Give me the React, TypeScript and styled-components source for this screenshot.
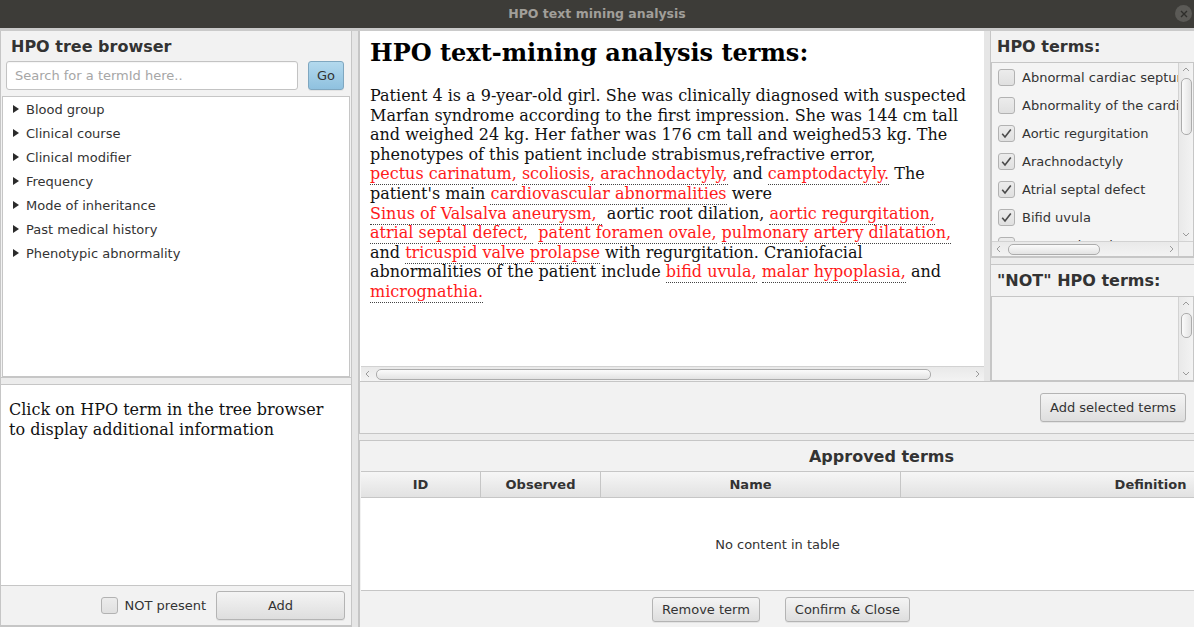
import React from 'react';
import styled, { createGlobalStyle } from 'styled-components';

const Global = createGlobalStyle`
  html, body { margin: 0; padding: 0; background: #f2f2f2; }
  body { font-family: "DejaVu Sans", "Liberation Sans", sans-serif; overflow: hidden; }
  #root { width: 1194px; height: 627px; }
  * { box-sizing: border-box; }
`;

const BORDER = '#c6c6c6';

const Window = styled.div`
  width: 1194px;
  height: 627px;
  display: flex;
  flex-direction: column;
  overflow: hidden;
  background: #f2f2f2;
`;

const TitleBar = styled.div`
  position: relative;
  flex: 0 0 28px;
  height: 28px;
  background: #3d3c38;
  color: #a19f9a;
  font: bold 12.5px "DejaVu Sans", sans-serif;
  display: flex;
  align-items: center;
  justify-content: center;
  padding-bottom: 1px;
`;

const CloseBtn = styled.div`
  position: absolute;
  right: 2px;
  top: 5px;
  width: 17px;
  height: 17px;
  border-radius: 50%;
  background: #5b5a56;
  display: flex;
  align-items: center;
  justify-content: center;
`;

const Body = styled.div`
  flex: 1;
  min-height: 0;
  display: flex;
  background: #cacaca;
  padding-top: 3px;
`;

const Column = styled.div<{ $w?: number }>`
  display: flex;
  flex-direction: column;
  min-height: 0;
  ${p => (p.$w ? `flex: 0 0 ${p.$w}px; width: ${p.$w}px;` : 'flex: 1; min-width: 0;')}
`;

const LeftCol = styled(Column)`
  border-left: 1px solid ${BORDER};
  border-right: 1px solid ${BORDER};
  border-bottom: 2px solid ${BORDER};
  background: #f2f2f2;
`;

const VDivider = styled.div`
  flex: 0 0 7px;
  background: #e6e6e6;
  border-right: 1px solid ${BORDER};
`;

const HDivider = styled.div`
  flex: 0 0 8px;
  background: #ececec;
  border-top: 1px solid ${BORDER};
  border-bottom: 1px solid ${BORDER};
`;

const Pane = styled.div<{ $h?: number }>`
  display: flex;
  flex-direction: column;
  background: #f2f2f2;
  min-height: 0;
  ${p => (p.$h ? `flex: 0 0 ${p.$h}px;` : 'flex: 1;')}
`;

const PaneHeader = styled.div`
  padding: 6px 6px 6px 5px;
  display: flex;
  flex-direction: column;
  gap: 4px;
`;

const SansHeading = styled.div<{ $pad?: number }>`
  font: bold 16px "DejaVu Sans", sans-serif;
  color: #333;
  line-height: 20px;
  padding-left: ${p => p.$pad ?? 0}px;
  white-space: nowrap;
`;

const SearchRow = styled.div`
  display: flex;
  gap: 10px;
  height: 29px;
`;

const SearchInput = styled.input`
  width: 292px;
  height: 29px;
  border: 1px solid #c3c3c3;
  border-radius: 3px;
  background: #fff;
  padding: 0 8px;
  font: 13px "DejaVu Sans", sans-serif;
  color: #333;
  box-shadow: inset 0 1px 1px rgba(0, 0, 0, 0.04);
  outline: none;
  &::placeholder { color: #a6a6a6; }
`;

const Button = styled.button<{ $w?: number; $h?: number; $blue?: boolean }>`
  height: ${p => p.$h ?? 29}px;
  ${p => (p.$w ? `width: ${p.$w}px;` : 'padding: 0 9px;')}
  border: 1px solid ${p => (p.$blue ? '#7fa7c0' : '#b4b4b4')};
  border-radius: 3px;
  background: ${p =>
    p.$blue
      ? 'linear-gradient(#b3d9ee, #8fc1df)'
      : 'linear-gradient(#f4f4f4, #dedede)'};
  box-shadow: 0 1px 0 rgba(0, 0, 0, 0.06);
  font: 13px "DejaVu Sans", sans-serif;
  color: #333;
  white-space: nowrap;
  cursor: default;
`;

const Tree = styled.div`
  flex: 1;
  margin: 0 1px;
  background: #fff;
  border: 1px solid ${BORDER};
`;

const TreeItem = styled.div`
  height: 24px;
  display: flex;
  align-items: center;
  padding-left: 10px;
  font: 13px "DejaVu Sans", sans-serif;
  color: #333;
`;

const Disclosure = styled.span`
  width: 0;
  height: 0;
  border-left: 6px solid #2b2b2b;
  border-top: 4px solid transparent;
  border-bottom: 4px solid transparent;
  margin-right: 7px;
`;

const InfoBox = styled.div`
  flex: 1;
  background: #fff;
  padding: 15px 8px;
  font: 16px "DejaVu Serif", serif;
  line-height: 19.5px;
  color: #111;
`;

const BottomBar = styled.div<{ $h: number; $center?: boolean }>`
  flex: 0 0 ${p => p.$h}px;
  display: flex;
  align-items: center;
  justify-content: ${p => (p.$center ? 'center' : 'flex-end')};
  gap: ${p => (p.$center ? 25 : 10)}px;
  padding: ${p => (p.$center ? '0 0 0 7px' : '0 6px')};
  background: #f2f2f2;
  border-top: 1px solid ${BORDER};
`;

const CheckLabel = styled.label`
  display: flex;
  align-items: center;
  gap: 7px;
  font: 13px "DejaVu Sans", sans-serif;
  color: #333;
  white-space: nowrap;
`;

const Box = styled.span`
  flex: 0 0 17px;
  width: 17px;
  height: 17px;
  border: 1px solid #b2b2b2;
  border-radius: 3px;
  background: linear-gradient(#ececec, #e0e0e0);
  display: flex;
  align-items: center;
  justify-content: center;
`;

const Check = ({ on }: { on?: boolean }) => (
  <Box>
    {on && (
      <svg width="13" height="13" viewBox="0 0 13 13">
        <path d="M2.2 6.8 L5 10 L10.8 2.4" fill="none" stroke="#4a4a4a" strokeWidth="1.6" />
      </svg>
    )}
  </Box>
);

/* ---------- scrollbars ---------- */

const ScrollH = styled.div`
  flex: 0 0 15px;
  height: 15px;
  display: flex;
  align-items: center;
  background: linear-gradient(#e9e9e9, #f3f3f3);
  border-top: 1px solid #d2d2d2;
`;

const ScrollV = styled.div`
  flex: 0 0 15px;
  width: 15px;
  display: flex;
  flex-direction: column;
  align-items: center;
  background: linear-gradient(90deg, #e9e9e9, #f3f3f3);
  border-left: 1px solid #d2d2d2;
`;

const ArrowBox = styled.div<{ $v?: boolean }>`
  ${p => (p.$v ? 'height: 14px; width: 100%;' : 'width: 14px; height: 100%;')}
  flex: 0 0 14px;
  display: flex;
  align-items: center;
  justify-content: center;
`;

const Track = styled.div<{ $v?: boolean }>`
  flex: 1;
  display: flex;
  flex-direction: ${p => (p.$v ? 'column' : 'row')};
  align-items: center;
`;

const Thumb = styled.div<{ $v?: boolean; $off: number; $len: number }>`
  ${p =>
    p.$v
      ? `margin-top: ${p.$off}px; height: ${p.$len}px; width: 11px;`
      : `margin-left: ${p.$off}px; width: ${p.$len}px; height: 11px;`}
  border: 1px solid #acacac;
  border-radius: 5px;
  background: ${p =>
    p.$v ? 'linear-gradient(90deg, #fbfbfb, #e3e3e3)' : 'linear-gradient(#fbfbfb, #e3e3e3)'};
`;

const Chevron = ({ dir }: { dir: 'l' | 'r' | 'u' | 'd' }) => {
  const d = {
    l: 'M5 1 L2 4 L5 7',
    r: 'M3 1 L6 4 L3 7',
    u: 'M1 5 L4 2 L7 5',
    d: 'M1 3 L4 6 L7 3',
  }[dir];
  return (
    <svg width="8" height="8" viewBox="0 0 8 8">
      <path d={d} fill="none" stroke="#9a9a9a" strokeWidth="1" />
    </svg>
  );
};

const HScroll = ({ off, len }: { off: number; len: number }) => (
  <ScrollH>
    <ArrowBox><Chevron dir="l" /></ArrowBox>
    <Track><Thumb $off={off} $len={len} /></Track>
    <ArrowBox><Chevron dir="r" /></ArrowBox>
  </ScrollH>
);

const VScroll = ({ off, len }: { off: number; len: number }) => (
  <ScrollV>
    <ArrowBox $v><Chevron dir="u" /></ArrowBox>
    <Track $v><Thumb $v $off={off} $len={len} /></Track>
    <ArrowBox $v><Chevron dir="d" /></ArrowBox>
  </ScrollV>
);

/* ---------- center text ---------- */

const CenterPane = styled(Column)`
  border-left: 1px solid ${BORDER};
  padding-left: 1px;
  background: #fff;
`;

const TextArea = styled.div`
  flex: 1;
  min-height: 0;
  overflow: hidden;
  background: #fff;
  padding: 8px 8px 8px 9px;
  color: #111;
  font-family: "DejaVu Serif", serif;
`;

const DocTitle = styled.h1`
  margin: 0 0 19px;
  font: bold 24px "DejaVu Serif", serif;
  line-height: 28px;
  color: #000;
  white-space: nowrap;
`;

const DocText = styled.div`
  font-size: 16px;
  line-height: 19.6px;
  white-space: nowrap;
`;

const Term = styled.span`
  color: #ff1a1a;
  border-bottom: 1px dotted #444;
  padding-bottom: 1px;
`;

/* ---------- right panel ---------- */

const RightPane = styled(Column)`
  background: #f2f2f2;
`;

const RightHeader = styled.div`
  flex: 0 0 31px;
  display: flex;
  align-items: center;
  padding-left: 6px;
`;

const ListBox = styled.div<{ $h: number }>`
  flex: 0 0 ${p => p.$h}px;
  display: flex;
  flex-direction: column;
  border: 1px solid ${BORDER};
  background: #f4f4f4;
  min-height: 0;
`;

const ListMain = styled.div`
  flex: 1;
  min-height: 0;
  display: flex;
`;

const ListRows = styled.div`
  flex: 1;
  min-width: 0;
  overflow: hidden;
`;

const ListRow = styled.div`
  height: 28px;
  display: flex;
  align-items: center;
  gap: 7px;
  padding-left: 6px;
  font: 13px "DejaVu Sans", sans-serif;
  color: #333;
  white-space: nowrap;
`;

const BottomRow = styled.div`
  flex: 0 0 15px;
  display: flex;
`;

const Corner = styled.div`
  flex: 0 0 15px;
  background: #f0f0f0;
  border-top: 1px solid #d2d2d2;
  border-left: 1px solid #d2d2d2;
`;

const ListHScroll = styled.div`
  flex: 1;
  display: flex;
  flex-direction: column;
`;

/* ---------- lower right ---------- */

const RightCol = styled(Column)`
  background: #f2f2f2;
`;

const TopSplit = styled.div`
  flex: 0 0 350px;
  display: flex;
  min-height: 0;
`;

const ActionRow = styled.div`
  flex: 0 0 52px;
  display: flex;
  align-items: center;
  justify-content: flex-end;
  padding-right: 8px;
  border-top: 1px solid ${BORDER};
  border-left: 1px solid ${BORDER};
  background: #f2f2f2;
`;

const Approved = styled.div`
  flex: 1;
  display: flex;
  flex-direction: column;
  border-left: 1px solid ${BORDER};
  padding-left: 1px;
  min-height: 0;
`;

const ApprovedTitle = styled.div`
  flex: 0 0 30px;
  display: flex;
  align-items: center;
  justify-content: center;
  padding: 2px 0 0 208px;
`;

const TableHead = styled.div`
  flex: 0 0 27px;
  display: flex;
  overflow: hidden;
  border-top: 1px solid ${BORDER};
  border-bottom: 1px solid ${BORDER};
`;

const HeadCell = styled.div<{ $w: number }>`
  flex: 0 0 ${p => p.$w}px;
  display: flex;
  align-items: center;
  justify-content: center;
  border-right: 1px solid ${BORDER};
  background: linear-gradient(#f6f6f6, #e2e2e2);
  font: bold 13px "DejaVu Sans", sans-serif;
  color: #333;
`;

const TableBody = styled.div`
  flex: 1;
  background: #fff;
  display: flex;
  align-items: center;
  justify-content: center;
  font: 13px "DejaVu Sans", sans-serif;
  color: #333;
`;

const treeItems = [
  'Blood group',
  'Clinical course',
  'Clinical modifier',
  'Frequency',
  'Mode of inheritance',
  'Past medical history',
  'Phenotypic abnormality',
];

const hpoTerms: [string, boolean][] = [
  ['Abnormal cardiac septum morphology', false],
  ['Abnormality of the cardiovascular system', false],
  ['Aortic regurgitation', true],
  ['Arachnodactyly', true],
  ['Atrial septal defect', true],
  ['Bifid uvula', true],
  ['Camptodactyly', true],
];

const columns: [string, number][] = [
  ['ID', 120],
  ['Observed', 120],
  ['Name', 300],
  ['Definition', 500],
];

export default function App() {
  return (
    <Window>
      <Global />
      <TitleBar>
        HPO text mining analysis
        <CloseBtn>
          <svg width="8" height="8" viewBox="0 0 8 8">
            <path d="M1 1 L7 7 M7 1 L1 7" stroke="#2f2e2b" strokeWidth="1.4" />
          </svg>
        </CloseBtn>
      </TitleBar>
      <Body>
        <LeftCol $w={352}>
          <Pane $h={346}>
            <PaneHeader>
              <SansHeading $pad={5}>HPO tree browser</SansHeading>
              <SearchRow>
                <SearchInput placeholder="Search for a termId here.." />
                <Button $w={36} $blue>Go</Button>
              </SearchRow>
            </PaneHeader>
            <Tree>
              {treeItems.map(t => (
                <TreeItem key={t}>
                  <Disclosure />
                  {t}
                </TreeItem>
              ))}
            </Tree>
          </Pane>
          <HDivider />
          <InfoBox>
            Click on HPO term in the tree browser
            <br />
            to display additional information
          </InfoBox>
          <BottomBar $h={40}>
            <CheckLabel>
              <Check />
              NOT present
            </CheckLabel>
            <Button $w={129}>Add</Button>
          </BottomBar>
        </LeftCol>
        <VDivider />
        <RightCol>
          <TopSplit>
            <CenterPane $w={625}>
              <TextArea>
                <DocTitle>HPO text-mining analysis terms:</DocTitle>
                <DocText>
                  Patient 4 is a 9-year-old girl. She was clinically diagnosed with suspected
                  <br />
                  Marfan syndrome according to the first impression. She was 144 cm tall
                  <br />
                  and weighed 24 kg. Her father was 176 cm tall and weighed53 kg. The
                  <br />
                  phenotypes of this patient include strabismus,refractive error,
                  <br />
                  <Term>pectus carinatum,</Term> <Term>scoliosis,</Term>{' '}
                  <Term>arachnodactyly,</Term> and <Term>camptodactyly.</Term> The
                  <br />
                  patient's main <Term>cardiovascular abnormalities</Term> were
                  <br />
                  <Term>Sinus of Valsalva aneurysm,{'\u00a0'}</Term> aortic root dilation,{' '}
                  <Term>aortic regurgitation,</Term>
                  <br />
                  <Term>atrial septal defect,{'\u00a0'}</Term> <Term>patent foramen ovale,</Term>{' '}
                  <Term>pulmonary artery dilatation,</Term>
                  <br />
                  and <Term>tricuspid valve prolapse</Term> with regurgitation. Craniofacial
                  <br />
                  abnormalities of the patient include <Term>bifid uvula,</Term>{' '}
                  <Term>malar hypoplasia,</Term> and
                  <br />
                  <Term>micrognathia.</Term>
                </DocText>
              </TextArea>
              <HScroll off={1} len={555} />
            </CenterPane>
            <VDivider />
            <RightPane>
              <RightHeader>
                <SansHeading>HPO terms:</SansHeading>
              </RightHeader>
              <ListBox $h={195}>
                <ListMain>
                  <ListRows>
                    {hpoTerms.map(([t, on]) => (
                      <ListRow key={t}>
                        <Check on={on} />
                        {t}
                      </ListRow>
                    ))}
                  </ListRows>
                  <VScroll off={1} len={57} />
                </ListMain>
                <BottomRow>
                  <ListHScroll>
                    <HScroll off={2} len={92} />
                  </ListHScroll>
                  <Corner />
                </BottomRow>
              </ListBox>
              <HDivider />
              <RightHeader>
                <SansHeading>"NOT" HPO terms:</SansHeading>
              </RightHeader>
              <ListBox $h={85}>
                <ListMain>
                  <ListRows />
                  <VScroll off={2} len={25} />
                </ListMain>
              </ListBox>
            </RightPane>
          </TopSplit>
          <ActionRow>
            <Button>Add selected terms</Button>
          </ActionRow>
          <HDivider />
          <Approved>
            <ApprovedTitle>
              <SansHeading>Approved terms</SansHeading>
            </ApprovedTitle>
            <TableHead>
              {columns.map(([c, w]) => (
                <HeadCell key={c} $w={w}>
                  {c}
                </HeadCell>
              ))}
            </TableHead>
            <TableBody>No content in table</TableBody>
            <BottomBar $h={37} $center>
              <Button $h={25}>Remove term</Button>
              <Button $h={25}>Confirm &amp; Close</Button>
            </BottomBar>
          </Approved>
        </RightCol>
      </Body>
    </Window>
  );
}
